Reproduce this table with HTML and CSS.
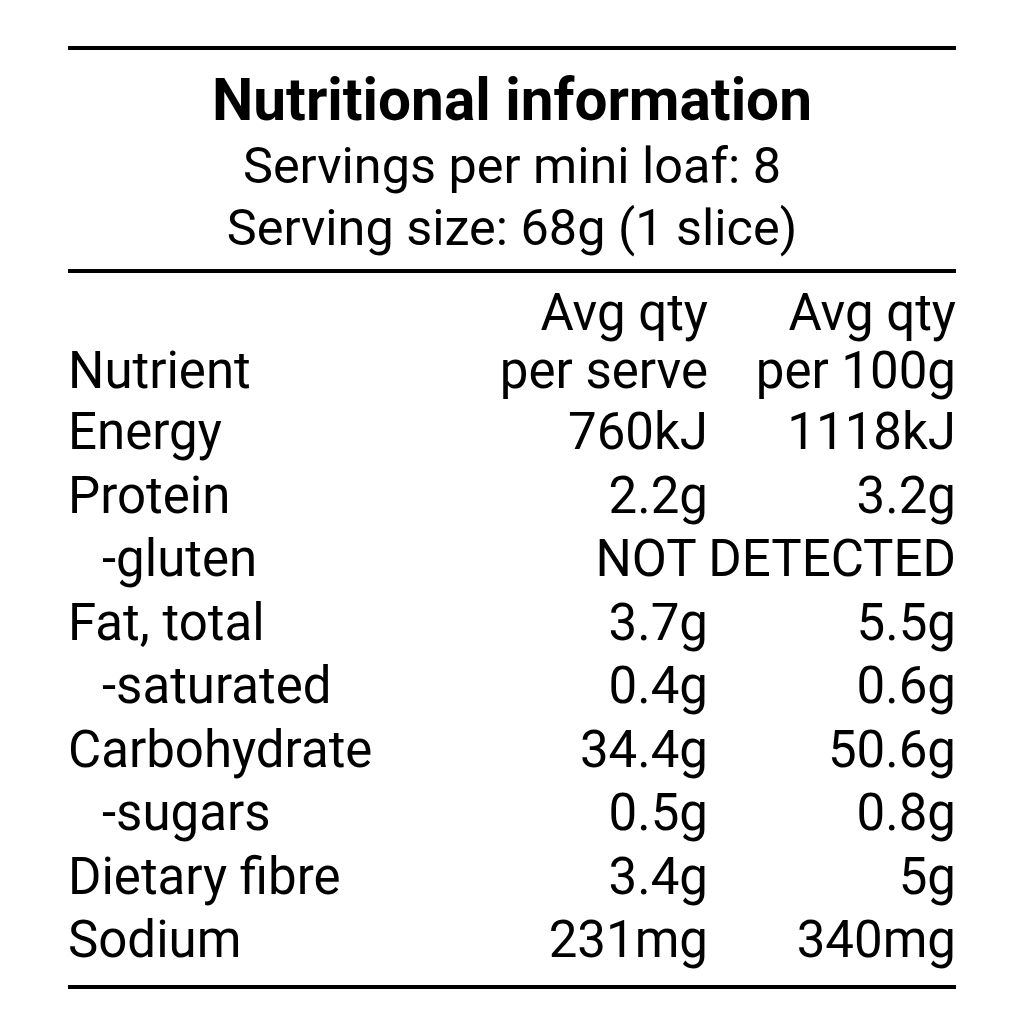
FILE: index.html
```html
<!DOCTYPE html>
<html lang="en">
<head>
<meta charset="utf-8">
<title>Nutritional information</title>
<link rel="stylesheet" href="styles.css">
</head>
<body>
<div class="panel">
  <header class="head">
    <h1 class="title">Nutritional information</h1>
    <p class="sub">Servings per mini loaf: 8</p>
    <p class="sub">Serving size: 68g (1 slice)</p>
  </header>
  <div class="table">
    <div class="cell th name">Nutrient</div>
    <div class="cell th num">Avg qty<br>per serve</div>
    <div class="cell th num">Avg qty<br>per 100g</div>

    <div class="cell name">Energy</div>
    <div class="cell num">760kJ</div>
    <div class="cell num">1118kJ</div>

    <div class="cell name">Protein</div>
    <div class="cell num">2.2g</div>
    <div class="cell num">3.2g</div>

    <div class="cell name sub-item">-gluten</div>
    <div class="cell num span2">NOT DETECTED</div>

    <div class="cell name">Fat, total</div>
    <div class="cell num">3.7g</div>
    <div class="cell num">5.5g</div>

    <div class="cell name sub-item">-saturated</div>
    <div class="cell num">0.4g</div>
    <div class="cell num">0.6g</div>

    <div class="cell name">Carbohydrate</div>
    <div class="cell num">34.4g</div>
    <div class="cell num">50.6g</div>

    <div class="cell name sub-item">-sugars</div>
    <div class="cell num">0.5g</div>
    <div class="cell num">0.8g</div>

    <div class="cell name">Dietary fibre</div>
    <div class="cell num">3.4g</div>
    <div class="cell num">5g</div>

    <div class="cell name">Sodium</div>
    <div class="cell num">231mg</div>
    <div class="cell num">340mg</div>
  </div>
</div>
</body>
</html>
```

FILE: styles.css
```css
html, body {
  margin: 0;
  padding: 0;
  background: #ffffff;
}

body {
  font-family: Roboto, "Liberation Sans", Arial, sans-serif;
  color: #000000;
}

.panel {
  width: 888px;
  margin: 46px 0 0 68px;
  border-top: 4px solid #000;
  border-bottom: 4px solid #000;
}

.head {
  padding: 15px 0 10px;
  border-bottom: 4px solid #000;
  text-align: center;
}

.title {
  margin: 0;
  font-size: 58.5px;
  line-height: 70px;
  font-weight: 700;
}

.sub {
  margin: 0;
  font-size: 50.4px;
  line-height: 62px;
  font-weight: 400;
}

.table {
  display: grid;
  grid-template-columns: 380px 260px 248px;
  padding: 11px 0 13px;
  font-size: 51px;
  line-height: 63.5px;
}

.cell {
  white-space: nowrap;
}

.th {
  line-height: 58px;
}

.th.name {
  align-self: end;
}

.num {
  text-align: right;
}

.sub-item {
  padding-left: 34px;
}

.span2 {
  grid-column: span 2;
}
```
